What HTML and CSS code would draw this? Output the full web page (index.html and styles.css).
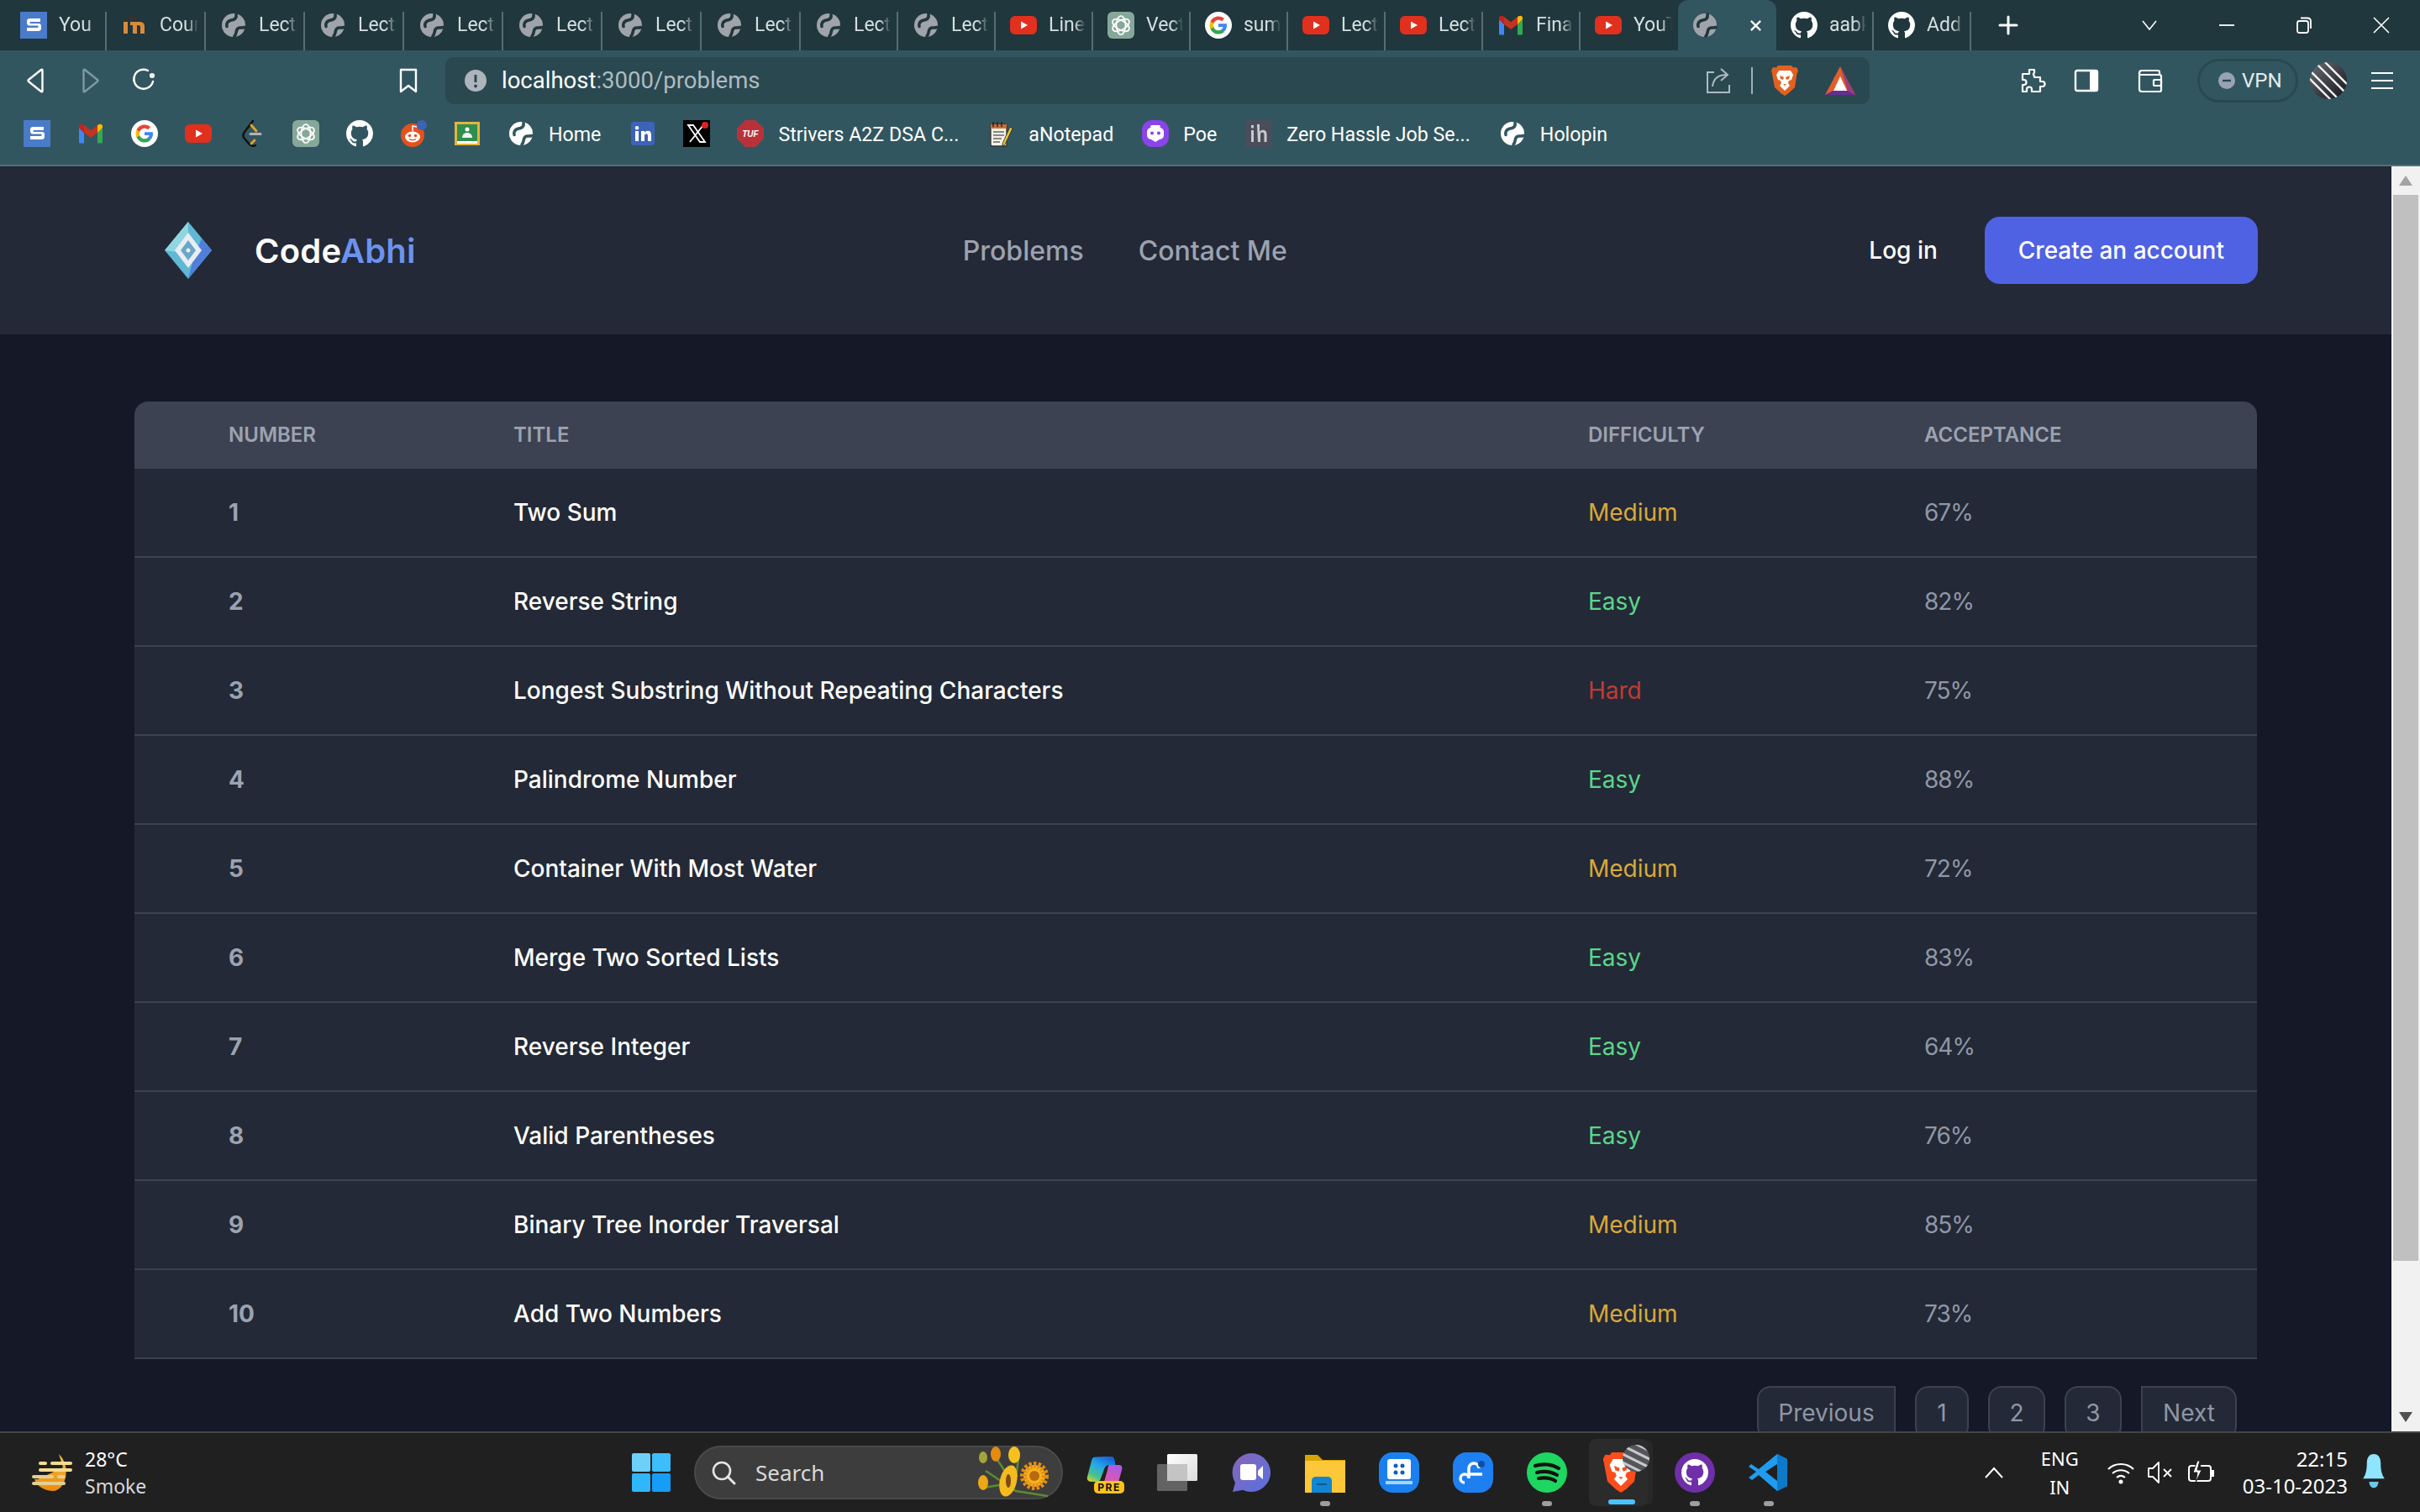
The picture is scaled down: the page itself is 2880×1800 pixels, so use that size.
FILE: index.html
```html
<!DOCTYPE html>
<html lang="en">
<head>
<meta charset="utf-8">
<title>CodeAbhi - Problems</title>
<link rel="stylesheet" href="styles.css">
</head>
<body>
<svg class="defs" width="0" height="0" aria-hidden="true">
  <defs>
  <linearGradient id="gc1" x1="0.7" y1="0" x2="0.1" y2="1"><stop offset="0" stop-color="#1766d8"/><stop offset=".4" stop-color="#25a8e8"/><stop offset=".75" stop-color="#49c28c"/><stop offset="1" stop-color="#d8d22e"/></linearGradient>
  <linearGradient id="gc2" x1="0.7" y1="0" x2="0.3" y2="1"><stop offset="0" stop-color="#a95be6"/><stop offset="1" stop-color="#f0559a"/></linearGradient>
  <linearGradient id="gw" x1="0" y1="0" x2="0" y2="1"><stop offset="0" stop-color="#eec044"/><stop offset="1" stop-color="#ee8a10"/></linearGradient>
  <linearGradient id="gm" x1="0" y1="0" x2="1" y2="1"><stop offset="0" stop-color="#8a63b8"/><stop offset=".5" stop-color="#6f6ccc"/><stop offset="1" stop-color="#5a6fe0"/></linearGradient>
  <linearGradient id="gt1" x1="0" y1="0" x2="1" y2="1"><stop offset="0" stop-color="#ffffff"/><stop offset="1" stop-color="#dcdcdc"/></linearGradient>
  <linearGradient id="gav" x1="0" y1="0" x2="1" y2="1"><stop offset="0" stop-color="#6a6a74"/><stop offset="1" stop-color="#15151a"/></linearGradient>
  </defs>
  <symbol id="i-globe" viewBox="0 0 32 32"><circle cx="16" cy="16" r="14" fill="#a0a4aa"/><path d="M19 3c.5 3-.5 5.500-3.500 6.500-3 .8-5.500 1-7 3.500-.8 1.500-1 3-.5 4.500M29 18.500c-2 .8-3.500.5-5 .5-2.500 0-4 1.500-4.500 3.500-.5 2.500-.5 4.500-2.500 6.500" fill="none" stroke="#1f373d" stroke-width="3.600" stroke-linecap="round"/></symbol>
  <symbol id="i-globe-white" viewBox="0 0 32 32"><circle cx="16" cy="16" r="14" fill="#fff"/><path d="M19 3c.5 3-.5 5.500-3.500 6.500-3 .8-5.500 1-7 3.500-.8 1.500-1 3-.5 4.500M29 18.500c-2 .8-3.500.5-5 .5-2.500 0-4 1.500-4.500 3.500-.5 2.500-.5 4.500-2.500 6.500" fill="none" stroke="#325660" stroke-width="3.600" stroke-linecap="round"/></symbol>
  <symbol id="i-s" viewBox="0 0 32 32"><rect width="32" height="32" fill="#4a7bc8"/><path d="M24 8H11.500C9 8 8 9.500 8 11.500v1.500c0 2 1 3.500 3.500 3.500h9c.8 0 1 .5 1 1v.5c0 .7-.3 1-1 1H8v4h13.500c2.500 0 3.500-1.500 3.500-3.500v-2.500c0-2-1-3-3.500-3h-9c-.7 0-1-.4-1-1s.3-1 1-1H24z" fill="#fff"/></symbol>
  <symbol id="i-yt" viewBox="0 0 32 32"><rect y="5" width="32" height="22" rx="6" fill="#e1301e"/><path d="M13 11.500 21 16l-8 4.500z" fill="#fff"/></symbol>
  <symbol id="i-gh" viewBox="0 0 16 16"><path fill="#fff" d="M8 0C3.580 0 0 3.580 0 8c0 3.540 2.290 6.530 5.470 7.590.4.070.55-.17.55-.38 0-.19-.01-.82-.01-1.490-2.010.37-2.530-.49-2.690-.94-.09-.23-.48-.94-.82-1.130-.28-.15-.68-.52-.01-.53.63-.01 1.080.58 1.230.82.72 1.210 1.870.87 2.330.66.07-.52.28-.87.51-1.070-1.780-.2-3.640-.89-3.640-3.950 0-.87.31-1.590.82-2.150-.08-.2-.36-1.020.08-2.120 0 0 .67-.21 2.200.82.64-.18 1.320-.27 2-.27.68 0 1.360.09 2 .27 1.530-1.040 2.200-.82 2.200-.82.44 1.100.16 1.920.08 2.120.51.56.82 1.270.82 2.150 0 3.070-1.870 3.750-3.650 3.950.29.25.54.73.54 1.480 0 1.070-.01 1.930-.01 2.200 0 .21.15.46.55.38A8.013 8.013 0 0 0 16 8c0-4.420-3.580-8-8-8z"/></symbol>
  <symbol id="i-gpt" viewBox="0 0 32 32"><rect width="32" height="32" rx="6" fill="#86a89a"/><g fill="none" stroke="#fff" stroke-width="1.700"><ellipse cx="16" cy="16" rx="5.500" ry="11"/><ellipse cx="16" cy="16" rx="5.500" ry="11" transform="rotate(60 16 16)"/><ellipse cx="16" cy="16" rx="5.500" ry="11" transform="rotate(120 16 16)"/></g></symbol>
  <symbol id="i-g" viewBox="0 0 32 32"><circle cx="16" cy="16" r="16" fill="#fff"/><path d="M26 16.200c0-.8-.1-1.400-.2-2H16v3.800h5.600c-.2 1.300-1 2.400-2.200 3.100v2.500h3.500c2-1.800 3.100-4.500 3.100-7.400z" fill="#4285f4"/><path d="M16 26.500c2.900 0 5.300-1 7-2.600l-3.500-2.600c-.9.600-2.100 1-3.500 1-2.700 0-5-1.800-5.800-4.300H6.600v2.700c1.700 3.500 5.300 5.800 9.400 5.800z" fill="#34a853"/><path d="M10.200 18c-.2-.6-.3-1.300-.3-2s.1-1.400.3-2v-2.700H6.600C5.900 12.700 5.500 14.300 5.500 16s.4 3.300 1.100 4.700z" fill="#fbbc05"/><path d="M16 9.700c1.500 0 2.900.5 4 1.500l3-3C21.300 6.500 18.900 5.500 16 5.500c-4.100 0-7.700 2.300-9.400 5.800l3.600 2.700c.8-2.500 3.100-4.300 5.800-4.300z" fill="#ea4335"/></symbol>
  <symbol id="i-m" viewBox="0 0 32 32"><path d="M2 9v17c0 1 .6 1.500 1.500 1.500H8V15z" fill="#4285f4"/><path d="M24 15v12.500h4.500c.9 0 1.500-.5 1.500-1.500V9z" fill="#34a853"/><path d="M24 6v9l6-6V7.500C30 5 27.500 4 25.500 5.300z" fill="#fbbc05"/><path d="M8 15V6l8 6.200L24 6v9l-8 6z" fill="#c5321f"/><path d="M2 7.500V9l6 6V6L6.500 5.300C4.500 4 2 5 2 7.500z" fill="#c5221f"/></symbol>
  <symbol id="i-lc" viewBox="0 0 32 32"><path d="M17 1 7 14c-2 3-2 6 0 8l6 7c2 2 5 2 7 1" fill="none" stroke="#111" stroke-width="2.400" stroke-linecap="round"/><path d="M15 6l6 7M19 24l-4 4" stroke="#eaa220" stroke-width="2.800" stroke-linecap="round"/><path d="M14 16.500h12" stroke="#b3b3b3" stroke-width="3" stroke-linecap="round"/></symbol>
  <symbol id="i-reddit" viewBox="0 0 32 32"><circle cx="15" cy="18" r="14" fill="#e5511d"/><circle cx="26" cy="6" r="6" fill="#3d63b5"/><ellipse cx="15" cy="20" rx="9" ry="6.500" fill="#fff"/><circle cx="11.500" cy="18.500" r="1.800" fill="#e5511d"/><circle cx="18.500" cy="18.500" r="1.800" fill="#e5511d"/><path d="M15 13V7l5 1" fill="none" stroke="#fff" stroke-width="1.500"/><path d="M11 22.500c2 1.500 6 1.500 8 0" fill="none" stroke="#e5511d" stroke-width="1.300"/></symbol>
  <symbol id="i-class" viewBox="0 0 32 32"><rect x="1" y="2" width="30" height="28" fill="#e3b53c"/><rect x="4" y="5" width="24" height="20" fill="#2f8f4e"/><rect x="4" y="25" width="24" height="3" fill="#fff"/><circle cx="16" cy="11" r="2.500" fill="#fff"/><path d="M10 21c0-4 3-6 6-6s6 2 6 6z" fill="#f3f3f3"/></symbol>
  <symbol id="i-in" viewBox="0 0 32 32"><rect x="2" y="2" width="28" height="28" rx="3" fill="#3c63b8"/><path d="M7 13h4v12H7zM9 7a2.300 2.300 0 1 1 0 4.600A2.300 2.300 0 0 1 9 7zM14 13h4v2c1-1.500 2.300-2.300 4-2.300 3 0 4 2 4 5V25h-4v-6.300c0-1.500-.5-2.500-1.800-2.500S18 17.300 18 18.700V25h-4z" fill="#fff"/></symbol>
  <symbol id="i-x" viewBox="0 0 32 32"><rect width="32" height="32" fill="#000"/><path d="M6 6h6l14 20h-6zM24 6 8 26" fill="none" stroke="#fff" stroke-width="1.800"/><circle cx="26" cy="6" r="4" fill="#d22"/></symbol>
  <symbol id="i-tuf" viewBox="0 0 32 32"><path d="M10 0h12l10 10v12L22 32H10L0 22V10z" fill="#b9323a"/><text x="16" y="20" text-anchor="middle" font-family="Liberation Sans" font-size="10" font-weight="700" font-style="italic" fill="#fff">TUF</text></symbol>
  <symbol id="i-notepad" viewBox="0 0 32 32"><rect x="4" y="5" width="19" height="26" rx="2" fill="#f3f1e8" stroke="#333" stroke-width="1.300"/><rect x="4" y="5" width="19" height="5" fill="#c96f35"/><path d="M7 2v6M12 2v6M17 2v6" stroke="#222" stroke-width="1.400"/><path d="M7 14h13M7 18h13M7 22h10M7 26h8" stroke="#666" stroke-width="1.500"/><path d="M27 8l3 2-9 19-3 2 .2-3.500z" fill="#e8c33a" stroke="#222" stroke-width=".8"/></symbol>
  <symbol id="i-poe" viewBox="0 0 32 32"><rect width="32" height="32" rx="12" fill="#8a44e8"/><rect x="6" y="9" width="20" height="14" rx="5" fill="#fff"/><rect x="10" y="6" width="12" height="3" rx="1.500" fill="#fff"/><circle cx="12" cy="15.500" r="2" fill="#8a44e8"/><circle cx="20" cy="15.500" r="2" fill="#8a44e8"/><path d="M11 23h10l-5 3z" fill="#fff"/></symbol>
  <symbol id="i-ih" viewBox="0 0 32 32"><rect width="32" height="32" fill="#4a4d5c"/><path d="M7 12h3v14H7zM7 6h3v3.500H7zM14 5h3v9c1-1.500 2.300-2.200 4-2.200 3 0 4.500 2 4.500 5V26h-3v-8.700c0-1.800-.7-2.800-2.200-2.800-1.600 0-2.300 1.200-2.300 2.800V26h-3z" fill="#c9c9c9"/></symbol>
  <symbol id="i-brave" viewBox="0 0 32 36"><path d="M8 0h16l2 2.500 4-.5 2 4-1.500 4-.5 3L28 26l-7.500 7L16 36l-4.500-3L4 26 1.500 13l-.5-3L0 6l2-4 4 .5z" fill="#e2611f"/><path d="M9 6h14l3 5-2 6-3 1-1 3 2 3-6 6-6-6 2-3-1-3-3-1-2-6z" fill="#fff"/><path d="M10 12l5 2-1 3-3-1zM22 12l-5 2 1 3 3-1zM14 22h4l-2 2z" fill="#e2611f"/></symbol>
  <symbol id="i-brave-task" viewBox="0 0 32 36"><path d="M8 0h16l2 2.500 4-.5 2 4-1.500 4-.5 3L28 26l-7.500 7L16 36l-4.500-3L4 26 1.500 13l-.5-3L0 6l2-4 4 .5z" fill="#fb4e1c"/><path d="M9 6h14l3 5-2 6-3 1-1 3 2 3-6 6-6-6 2-3-1-3-3-1-2-6z" fill="#fff"/><path d="M10 12l5 2-1 3-3-1zM22 12l-5 2 1 3 3-1zM14 22h4l-2 2z" fill="#fb4e1c"/></symbol>
  <symbol id="i-bat" viewBox="0 0 36 36"><path d="M18 1l18 34H0z" fill="#e25f28"/><path d="M18 1l18 34-9-5z" fill="#9a3d7e"/><path d="M0 35l9-5h18l9 5z" fill="#662d91"/><path d="M18 13l8 17H10z" fill="#fff"/></symbol>
  <symbol id="i-puzzle" viewBox="0 0 32 32"><path d="M12 3h6v3.500a2.500 2.500 0 0 0 0 4V12h7v5h2.500a3 3 0 0 1 0 6H25v6H15v-2.500a3 3 0 0 0-6 0V29H4v-8h1.500a3 3 0 0 0 0-6H4V8h8z" fill="none" stroke="#fff" stroke-width="2.200" stroke-linejoin="round"/></symbol>
  <symbol id="i-win" viewBox="0 0 46 46"><rect width="22" height="22" rx="2" fill="#6dd0fb"/><rect x="24" width="22" height="22" rx="2" fill="#3dbdfb"/><rect y="24" width="22" height="22" rx="2" fill="#2fb6fb"/><rect x="24" y="24" width="22" height="22" rx="2" fill="#159df7"/></symbol>
  <symbol id="i-flowers" viewBox="0 0 93 64"><path d="M10 30 46 54 84 60M18 8l20 30M50 8l-4 30M8 50l24-4" stroke="#5e8a32" stroke-width="2.500" fill="none"/><circle cx="68" cy="36" r="13" fill="#f5b21e" stroke="#e58d10" stroke-width="8" stroke-dasharray="3 2"/><circle cx="68" cy="36" r="6" fill="#b96a10"/><ellipse cx="37" cy="42" rx="10" ry="19" fill="#f4bb1f" transform="rotate(14 37 42)"/><ellipse cx="37" cy="42" rx="3" ry="8" fill="#7d4b12"/><ellipse cx="22" cy="10" rx="6" ry="9" fill="#e58a12"/><ellipse cx="44" cy="11" rx="7" ry="10" fill="#f7c01e"/><ellipse cx="7" cy="14" rx="5" ry="7" fill="#a3a53b"/><ellipse cx="7" cy="44" rx="6" ry="9" fill="#eba716"/></symbol>
  <symbol id="i-copilot" viewBox="0 0 48 48"><path d="M12 6C14 5 30 5 33 5c3 0 4 2 4.500 4l1 6H31c-3 0-5 2-6 5l-4 11c-1 3-3 4-6 4H10c-4 0-6-3-5-6l5-19c.4-2 1-3 2-4z" fill="url(#gc1)"/><path d="M31 15h12c3 0 4 3 3 6l-4 15c-1 3-3 5-6 5H22l3-6 4-14c.5-3 1-6 2-6z" fill="url(#gc2)"/></symbol>
  <symbol id="i-meet" viewBox="0 0 48 48"><path d="M24 1a23 23 0 1 1-10 43.700L2 47l3-11A23 23 0 0 1 24 1z" fill="url(#gm)"/><rect x="11" y="14" width="19" height="19" rx="3" fill="#fff"/><path d="M32 22l6-6v16l-6-5z" fill="#fff"/></symbol>
  <symbol id="i-taskview" viewBox="0 0 48 44"><rect x="12" width="36" height="32" rx="1.500" fill="url(#gt1)"/><rect y="12" width="36" height="32" rx="1.500" fill="#707070" fill-opacity=".85"/><rect x="12" y="12" width="24" height="20" fill="#c4c4c4"/></symbol>
  <symbol id="i-folder" viewBox="0 0 48 48"><path d="M0 3h15l6 6h27v7H0z" fill="#d9a300"/><path d="M0 10h48v38H0z" fill="#fcc83a"/><path d="M8 48V34c0-3 2-5 5-5h14c3 0 5 2 5 5v14z" fill="#1485d0"/><rect x="14" y="37" width="12" height="2" fill="#0b5a94"/></symbol>
  <symbol id="i-todo" viewBox="0 0 48 48"><rect width="48" height="48" rx="16" fill="#1a80f0"/><rect x="10" y="8" width="28" height="24" rx="3" fill="#fff"/><rect x="8" y="34" width="32" height="4" fill="#a8d3fb"/><circle cx="20" cy="16" r="2.500" fill="#0d5fbe"/><circle cx="28" cy="16" r="2.500" fill="#0d5fbe"/><circle cx="20" cy="24" r="2.500" fill="#0d5fbe"/><circle cx="28" cy="24" r="2.500" fill="#0d5fbe"/></symbol>
  <symbol id="i-f" viewBox="0 0 48 48"><rect width="48" height="48" rx="16" fill="#1e7ff0"/><path d="M14 36a5 5 0 1 1 5-5V19a6 6 0 0 1 12 0M19 26h16" fill="none" stroke="#fff" stroke-width="3.500"/><circle cx="34" cy="14" r="4" fill="#0f4ea8"/></symbol>
  <symbol id="i-spotify" viewBox="0 0 48 48"><circle cx="24" cy="24" r="24" fill="#1ed760"/><path d="M10 16c9-3 20-2 28 3M12 24c8-2 17-1 24 3M14 31c6-1 14-1 20 3" fill="none" stroke="#111" stroke-width="4.200" stroke-linecap="round"/></symbol>
  <symbol id="i-vscode" viewBox="0 0 48 48"><path d="M34 2l12 6v32l-12 6L12 27 4 33l-4-3 9-7-9-6 3-3 9 6z" fill="#1f9cf0"/><path d="M34 2v44l12-6V8z" fill="#0a7ac9"/><path d="M34 14 20 23l14 11z" fill="#202020"/></symbol>
  <symbol id="i-gh-task" viewBox="0 0 48 48"><circle cx="24" cy="24" r="24" fill="#6e2fa8"/><svg x="8" y="8" width="32" height="32" viewBox="0 0 16 16"><use href="#i-gh"/></svg></symbol>
</svg>

<div class="screen">
  <div class="tabstrip">
    <div class="tab tab-wide tab-first"><svg class="fav"><use href="#i-s"/></svg><span class="tab-title">You</span></div>
    <div class="tab tab-wide"><svg class="fav" viewBox="0 0 32 32"><path d="M3 26V12h5v14zM11 26V12h5l6 0c4 0 6 2 6 6v8h-5v-8c0-1-1-2-2-2h-2v10h-5V16h-3z" fill="#d98a3a"/><path d="M4 8l10-4 8 4-8 3z" fill="#333"/></svg><span class="tab-title">Cour</span></div>
    <div class="tab tab-wide"><svg class="fav"><use href="#i-globe"/></svg><span class="tab-title">Lectu</span></div>
    <div class="tab tab-wide"><svg class="fav"><use href="#i-globe"/></svg><span class="tab-title">Lectu</span></div>
    <div class="tab tab-wide"><svg class="fav"><use href="#i-globe"/></svg><span class="tab-title">Lectu</span></div>
    <div class="tab tab-wide"><svg class="fav"><use href="#i-globe"/></svg><span class="tab-title">Lectu</span></div>
    <div class="tab tab-wide"><svg class="fav"><use href="#i-globe"/></svg><span class="tab-title">Lectu</span></div>
    <div class="tab tab-wide"><svg class="fav"><use href="#i-globe"/></svg><span class="tab-title">Lectu</span></div>
    <div class="tab"><svg class="fav"><use href="#i-globe"/></svg><span class="tab-title">Lect</span></div>
    <div class="tab"><svg class="fav"><use href="#i-globe"/></svg><span class="tab-title">Lect</span></div>
    <div class="tab"><svg class="fav"><use href="#i-yt"/></svg><span class="tab-title">Line</span></div>
    <div class="tab"><svg class="fav"><use href="#i-gpt"/></svg><span class="tab-title">Vect</span></div>
    <div class="tab"><svg class="fav"><use href="#i-g"/></svg><span class="tab-title">sum</span></div>
    <div class="tab"><svg class="fav"><use href="#i-yt"/></svg><span class="tab-title">Lect</span></div>
    <div class="tab"><svg class="fav"><use href="#i-yt"/></svg><span class="tab-title">Lect</span></div>
    <div class="tab"><svg class="fav"><use href="#i-m"/></svg><span class="tab-title">Fina</span></div>
    <div class="tab tab-plain"><svg class="fav"><use href="#i-yt"/></svg><span class="tab-title">YouT</span></div>
    <div class="tab tab-active"><svg class="fav"><use href="#i-globe"/></svg><svg class="tab-close" viewBox="0 0 16 16"><path d="M2 2l12 12M14 2 2 14" stroke="#fff" stroke-width="2.400"/></svg></div>
    <div class="tab"><svg class="fav" viewBox="0 0 16 16"><use href="#i-gh"/></svg><span class="tab-title">aabk</span></div>
    <div class="tab"><svg class="fav" viewBox="0 0 16 16"><use href="#i-gh"/></svg><span class="tab-title">Add</span></div>
    <svg class="tab-new" viewBox="0 0 24 24"><path d="M12 2v20M2 12h20" stroke="#fff" stroke-width="3" stroke-linecap="round"/></svg>
    <div class="wincontrols">
      <span class="winbtn"><svg class="wi" viewBox="0 0 20 20"><path d="M2 5l8 10 8-10" fill="none" stroke="#fff" stroke-width="1.600"/></svg></span>
      <span class="winbtn"><svg class="wi" viewBox="0 0 20 20"><path d="M1 10h18" stroke="#fff" stroke-width="1.800"/></svg></span>
      <span class="winbtn"><svg class="wi" viewBox="0 0 20 20"><rect x="2" y="5" width="13" height="14" rx="2.500" fill="none" stroke="#fff" stroke-width="1.800"/><path d="M6 1.500h8c2.500 0 4 1.500 4 4V14" fill="none" stroke="#fff" stroke-width="1.800"/></svg></span>
      <span class="winbtn"><svg class="wi" viewBox="0 0 20 20"><path d="M1 1l18 18M19 1 1 19" stroke="#fff" stroke-width="1.600"/></svg></span>
    </div>
  </div>

  <div class="toolbar">
    <span class="navbtn"><svg class="ti" viewBox="0 0 32 32"><path d="M22 3 7 15c-.7.600-.7 1.400 0 2l15 12c1 .6 1.500.2 1.500-1V4c0-1.200-.5-1.600-1.500-1z" fill="none" stroke="#fff" stroke-width="2.400" stroke-linejoin="round"/></svg></span>
    <span class="navbtn"><svg class="ti" viewBox="0 0 32 32"><path d="M10 3l15 12c.7.600.7 1.400 0 2L10 29c-1 .6-1.500.2-1.500-1V4c0-1.200.5-1.600 1.500-1z" fill="none" stroke="#7f9aa0" stroke-width="2.400" stroke-linejoin="round"/></svg></span>
    <span class="navbtn"><svg class="ti" viewBox="0 0 32 32"><path d="M27 17a11.500 11.500 0 1 1-6-13" fill="none" stroke="#fff" stroke-width="2.400" stroke-linecap="round"/><circle cx="26" cy="10" r="3" fill="#fff"/></svg></span>
    <span class="navbtn navbtn-mark"><svg class="ti" viewBox="0 0 32 32"><path d="M7 3h18v26l-9-7-9 7z" fill="none" stroke="#fff" stroke-width="2.400" stroke-linejoin="round"/></svg></span>
    <div class="urlbar">
      <svg class="url-info" viewBox="0 0 26 26"><circle cx="13" cy="13" r="13" fill="#aeb4bc"/><path d="M13 6v9" stroke="#2a4850" stroke-width="3"/><circle cx="13" cy="19.500" r="1.900" fill="#2a4850"/></svg>
      <span class="url-text"><span class="url-host">localhost</span>:3000/problems</span>
      <svg class="url-share" viewBox="0 0 30 32"><path d="M10 6H2v24h26v-9" fill="none" stroke="#aebcc0" stroke-width="2"/><path d="M8 23c1-9 7-14 17-14M18 2l8 7-8 7" fill="none" stroke="#aebcc0" stroke-width="2"/></svg>
      <span class="url-divider"></span>
      <svg class="url-lion"><use href="#i-brave"/></svg>
      <svg class="url-bat"><use href="#i-bat"/></svg>
    </div>
    <svg class="tb-ic tb-puzzle"><use href="#i-puzzle"/></svg>
    <svg class="tb-ic tb-side" viewBox="0 0 32 32"><rect x="3" y="4" width="26" height="24" rx="2" fill="none" stroke="#fff" stroke-width="2.400"/><rect x="20" y="4" width="9" height="24" fill="#fff"/></svg>
    <svg class="tb-ic tb-wallet" viewBox="0 0 32 32"><path d="M27 9V6a2 2 0 0 0-2-2H6a3 3 0 0 0-3 3v19a3 3 0 0 0 3 3h21a2 2 0 0 0 2-2V11a2 2 0 0 0-2-2H3" fill="none" stroke="#fff" stroke-width="2.200"/><rect x="20" y="15" width="9" height="7" rx="1" fill="none" stroke="#fff" stroke-width="2.200"/></svg>
    <div class="vpn"><svg class="vpn-dot" viewBox="0 0 20 20"><circle cx="10" cy="10" r="10" fill="#98a3b8"/><path d="M5 10h10" stroke="#2a4850" stroke-width="2.400"/></svg><span>VPN</span></div>
    <svg class="avatar" viewBox="0 0 44 44"><clipPath id="av"><circle cx="22" cy="22" r="22"/></clipPath><g clip-path="url(#av)"><rect width="44" height="44" fill="url(#gav)"/><path d="M-6 4 40 50M-6 14l46 46M2-4l46 46M12-6l40 40" stroke="#f2f2f2" stroke-width="2.400"/></g></svg>
    <svg class="tb-menu" viewBox="0 0 28 24"><path d="M1 3h26M1 12h26M1 21h26" stroke="#fff" stroke-width="2.200"/></svg>
  </div>

  <div class="bookmarks">
    <span class="bm"><svg class="fav"><use href="#i-s"/></svg></span>
    <span class="bm"><svg class="fav"><use href="#i-m"/></svg></span>
    <span class="bm"><svg class="fav"><use href="#i-g"/></svg></span>
    <span class="bm"><svg class="fav"><use href="#i-yt"/></svg></span>
    <span class="bm"><svg class="fav"><use href="#i-lc"/></svg></span>
    <span class="bm"><svg class="fav"><use href="#i-gpt"/></svg></span>
    <span class="bm"><svg class="fav" viewBox="0 0 16 16"><use href="#i-gh"/></svg></span>
    <span class="bm"><svg class="fav"><use href="#i-reddit"/></svg></span>
    <span class="bm"><svg class="fav"><use href="#i-class"/></svg></span>
    <span class="bm"><svg class="fav"><use href="#i-globe-white"/></svg><span class="bm-label">Home</span></span>
    <span class="bm"><svg class="fav"><use href="#i-in"/></svg></span>
    <span class="bm"><svg class="fav"><use href="#i-x"/></svg></span>
    <span class="bm"><svg class="fav"><use href="#i-tuf"/></svg><span class="bm-label">Strivers A2Z DSA C...</span></span>
    <span class="bm"><svg class="fav"><use href="#i-notepad"/></svg><span class="bm-label">aNotepad</span></span>
    <span class="bm"><svg class="fav"><use href="#i-poe"/></svg><span class="bm-label">Poe</span></span>
    <span class="bm"><svg class="fav"><use href="#i-ih"/></svg><span class="bm-label">Zero Hassle Job Se...</span></span>
    <span class="bm"><svg class="fav"><use href="#i-globe-white"/></svg><span class="bm-label">Holopin</span></span>
  </div>

  <div class="viewport">
    <main class="page">
      <nav class="sitenav">
        <svg class="logo" viewBox="0 0 56 68"><path d="M28 0 56 34 28 68 0 34z" fill="#5fb8d4"/><path d="M28 0 0 34l14 2L28 14z" fill="#8fd6e0"/><path d="M44 20 56 34 28 68 34 44z" fill="#4f7fd8"/><path d="M28 13 44 34 28 55 12 34z" fill="#e9edf2"/><path d="M28 22 37 34 28 46 19 34z" fill="#6aa7c7"/><circle cx="28" cy="34" r="2.500" fill="#e9edf2"/></svg>
        <span class="brand">Code<span class="brand-accent">Abhi</span></span>
        <div class="navlinks"><a class="navlink">Problems</a><a class="navlink">Contact Me</a></div>
        <div class="navactions"><a class="login">Log in</a><a class="signup">Create an account</a></div>
      </nav>

      <section class="tablewrap">
        <table class="problems">
          <colgroup><col class="c-num"><col class="c-title"><col class="c-diff"><col class="c-acc"></colgroup>
          <thead><tr><th class="num-cell">Number</th><th>Title</th><th>Difficulty</th><th>Acceptance</th></tr></thead>
          <tbody>
            <tr><td class="num-cell">1</td><td class="t">Two Sum</td><td class="medium">Medium</td><td class="acc">67%</td></tr>
            <tr><td class="num-cell">2</td><td class="t">Reverse String</td><td class="easy">Easy</td><td class="acc">82%</td></tr>
            <tr><td class="num-cell">3</td><td class="t">Longest Substring Without Repeating Characters</td><td class="hard">Hard</td><td class="acc">75%</td></tr>
            <tr><td class="num-cell">4</td><td class="t">Palindrome Number</td><td class="easy">Easy</td><td class="acc">88%</td></tr>
            <tr><td class="num-cell">5</td><td class="t">Container With Most Water</td><td class="medium">Medium</td><td class="acc">72%</td></tr>
            <tr><td class="num-cell">6</td><td class="t">Merge Two Sorted Lists</td><td class="easy">Easy</td><td class="acc">83%</td></tr>
            <tr><td class="num-cell">7</td><td class="t">Reverse Integer</td><td class="easy">Easy</td><td class="acc">64%</td></tr>
            <tr><td class="num-cell">8</td><td class="t">Valid Parentheses</td><td class="easy">Easy</td><td class="acc">76%</td></tr>
            <tr><td class="num-cell">9</td><td class="t">Binary Tree Inorder Traversal</td><td class="medium">Medium</td><td class="acc">85%</td></tr>
            <tr><td class="num-cell">10</td><td class="t">Add Two Numbers</td><td class="medium">Medium</td><td class="acc">73%</td></tr>
          </tbody>
        </table>
        <div class="pager">
          <a class="pg pg-first">Previous</a>
          <a class="pg pg-n1">1</a>
          <a class="pg pg-n">2</a>
          <a class="pg pg-n">3</a>
          <a class="pg pg-last">Next</a>
        </div>
      </section>
    </main>
    <div class="scrollbar">
      <span class="sb-btn"><span class="sb-up"></span></span>
      <span class="sb-thumb"></span>
      <span class="sb-track"></span>
      <span class="sb-btn"><span class="sb-down"></span></span>
    </div>
  </div>

  <footer class="taskbar">
    <div class="weather">
      <svg class="weather-ic" viewBox="0 0 48 44"><path d="M32 0c8 8 10 18 8 28-2 9-8 16-15 16S6 40 3 30h4l30-14z" fill="url(#gw)"/><g fill="#f5dc8e"><rect x="8" y="9" width="10" height="4" rx="2"/><rect x="22" y="9" width="26" height="4" rx="2"/><rect x="8" y="17" width="40" height="4" rx="2"/></g><g fill="#e5cf90"><rect y="25" width="26" height="4" rx="2"/><rect x="30" y="25" width="10" height="4" rx="2"/><rect y="33" width="40" height="4" rx="2"/></g></svg>
      <div class="weather-text"><span class="w-temp">28°C</span><span class="w-desc">Smoke</span></div>
    </div>
    <div class="apps">
      <svg class="startlogo"><use href="#i-win"/></svg>
      <div class="search">
        <svg class="search-ic" viewBox="0 0 30 30"><circle cx="13" cy="13" r="10" fill="none" stroke="#e5e5e5" stroke-width="2.600"/><path d="M20 20l8 8" stroke="#e5e5e5" stroke-width="3" stroke-linecap="round"/></svg>
        <span class="search-label">Search</span>
        <svg class="flowers"><use href="#i-flowers"/></svg>
      </div>
      <span class="app app-first"><span class="copilot-wrap"><svg class="app-ic"><use href="#i-copilot"/></svg><span class="pre">PRE</span></span></span>
      <span class="app"><svg class="app-ic"><use href="#i-taskview"/></svg></span>
      <span class="app"><svg class="app-ic"><use href="#i-meet"/></svg></span>
      <span class="app app-run"><svg class="app-ic"><use href="#i-folder"/></svg></span>
      <span class="app"><svg class="app-ic"><use href="#i-todo"/></svg></span>
      <span class="app"><svg class="app-ic"><use href="#i-f"/></svg></span>
      <span class="app app-run"><svg class="app-ic"><use href="#i-spotify"/></svg></span>
      <span class="app app-active"><svg class="app-ic"><use href="#i-brave-task"/></svg><svg class="app-badge" viewBox="0 0 32 34"><clipPath id="bd"><circle cx="16" cy="17" r="16"/></clipPath><g clip-path="url(#bd)"><rect width="32" height="34" fill="#55565c"/><path d="M-4 10 36 30M-4 0l40 20M-4 20l40 20M-4 30l40 20M-4-10l40 20" stroke="#c9c9cc" stroke-width="3"/></g></svg></span>
      <span class="app app-run"><svg class="app-ic"><use href="#i-gh-task"/></svg></span>
      <span class="app app-run"><svg class="app-ic"><use href="#i-vscode"/></svg></span>
    </div>
    <div class="tray">
      <svg class="tray-up" viewBox="0 0 22 14"><path d="M1 13 11 2l10 11" fill="none" stroke="#fff" stroke-width="2"/></svg>
      <div class="lang"><span>ENG</span><span>IN</span></div>
      <svg class="tray-ic tray-wifi" viewBox="0 0 32 32"><g fill="none" stroke="#fff" stroke-width="2.200"><path d="M1 12c8-8 22-8 30 0M6 17c6-5 14-5 20 0M11 22c3-2.500 7-2.500 10 0"/></g><circle cx="16" cy="27" r="2.500" fill="#fff"/></svg>
      <svg class="tray-ic tray-vol" viewBox="0 0 32 32"><path d="M2 11h5l7-7v24l-7-7H2z" fill="none" stroke="#fff" stroke-width="1.800" stroke-linejoin="round"/><path d="M20 12l9 9M29 12l-9 9" stroke="#fff" stroke-width="1.800"/></svg>
      <svg class="tray-ic tray-bat" viewBox="0 0 32 32"><path d="M11 8H5a3 3 0 0 0-3 3v12a3 3 0 0 0 3 3h20a3 3 0 0 0 3-3V11a3 3 0 0 0-3-3h-9" fill="none" stroke="#fff" stroke-width="2"/><rect x="29" y="13" width="3" height="8" fill="#fff"/><path d="M12 2 7 16h5l-2 12 7-15h-5l3-11z" fill="#fff" stroke="#202020"/></svg>
      <div class="clock"><span>22:15</span><span>03-10-2023</span></div>
      <svg class="bell" viewBox="0 0 28 48"><path d="M14 0c6 0 9 5 9 12 0 8 1 14 5 20H0c4-6 5-12 5-20C5 5 8 0 14 0z" fill="#8fe4ff"/><path d="M8 36h12c0 5-3 8-6 8s-6-3-6-8z" fill="#6cc7e8"/></svg>
    </div>
  </footer>
</div>
</body>
</html>
```

FILE: styles.css
```css
* { box-sizing: border-box; }
html, body { margin: 0; padding: 0; height: 100%; }
body { overflow: hidden; font-family: "Inter", "Liberation Sans", sans-serif; background: #141827; }
.defs { position: absolute; }
svg { display: block; flex: none; }
a { text-decoration: none; }

.screen { display: flex; flex-direction: column; width: 2880px; height: 1800px; }

/* Browser tab strip */
.tabstrip { display: flex; height: 60px; padding-left: 9px; background: #1f373d; flex: none; }
.tab { display: flex; align-items: flex-start; width: 116px; margin-top: 14px; padding: 0 7px 0 17px; gap: 14px; border-right: 2px solid #566d73; }
.tab-wide { width: 118px; }
.tab-first { padding-left: 15px; }
.tab-plain { border-right: 0; }
.tab-active { width: 117px; margin-top: 0; padding: 14px 16px 0 16px; background: #325660; border-radius: 12px 12px 0 0; border-right: 0; justify-content: space-between; }
.fav { width: 32px; height: 32px; }
.tab-title { flex: 1; min-width: 0; overflow: hidden; white-space: nowrap; font: 400 23px/32px "Roboto", sans-serif; color: #d7dfe1; -webkit-mask-image: linear-gradient(to right, #000 70%, transparent 100%); mask-image: linear-gradient(to right, #000 70%, transparent 100%); }
.tab-close { width: 15px; height: 15px; margin: 9px 1px 0 0; }
.tab-new { width: 24px; height: 24px; margin: 18px 0 0 32px; }
.wincontrols { display: flex; margin-left: auto; }
.winbtn { display: flex; width: 92px; height: 60px; align-items: center; justify-content: center; }
.wi { width: 20px; height: 20px; }

/* Browser toolbar */
.toolbar { display: flex; align-items: center; height: 64px; padding: 8px 0 0 11px; background: #325660; flex: none; }
.navbtn { display: flex; width: 64px; justify-content: center; }
.navbtn-mark { margin-left: 251px; margin-right: 12px; }
.ti { width: 32px; height: 32px; }
.urlbar { display: flex; align-items: center; width: 1695px; height: 56px; padding: 0 17px 0 23px; background: #2a4850; border-radius: 10px; }
.url-info { width: 26px; height: 26px; }
.url-text { margin-left: 18px; font: 400 27.5px/56px "Roboto", sans-serif; color: #aebcc0; white-space: nowrap; }
.url-host { color: #fff; }
.url-share { width: 30px; height: 32px; margin-left: auto; }
.url-divider { width: 2px; height: 32px; margin: 0 22px 0 24px; background: #9db0b4; }
.url-lion { width: 32px; height: 36px; }
.url-bat { width: 36px; height: 36px; margin-left: 32px; }
.tb-ic { width: 32px; height: 32px; }
.tb-puzzle { margin-left: 178px; }
.tb-side { margin-left: 32px; }
.tb-wallet { margin-left: 44px; }
.vpn { display: flex; align-items: center; gap: 8px; width: 120px; height: 52px; margin-left: 40px; padding-left: 22px; border: 3px solid #2a4850; border-radius: 26px; font: 400 24px/1 "Roboto", sans-serif; color: #e6ecee; }
.vpn-dot { width: 20px; height: 20px; }
.avatar { width: 44px; height: 44px; margin-left: 14px; }
.tb-menu { width: 28px; height: 24px; margin-left: 28px; }

/* Bookmarks */
.bookmarks { display: flex; align-items: center; height: 74px; padding: 0 0 2px 12px; background: #325660; border-bottom: 2px solid #4f7178; flex: none; }
.bm { display: flex; align-items: center; gap: 17px; padding: 0 16px; }
.bm-label { padding-top: 2px; font: 400 23.2px/32px "Roboto", sans-serif; color: #fff; white-space: nowrap; margin-right: 2px; }

/* Page area */
.viewport { display: flex; flex: 1; min-height: 0; }
.page { flex: 1; min-width: 0; overflow: hidden; background: #141827; }
.sitenav { display: flex; align-items: center; height: 200px; padding: 0 159px 0 196px; background: #242937; }
.logo { width: 56px; height: 68px; }
.brand { margin-left: 51px; font-size: 40px; font-weight: 600; letter-spacing: .2px; color: #fff; }
.brand-accent { color: #6b93ee; }
.navlinks { display: flex; gap: 65px; margin-left: 651px; }
.navlink { font-size: 32px; font-weight: 500; color: #9ca3af; }
.navactions { display: flex; align-items: center; gap: 56px; margin-left: auto; }
.login { font-size: 28px; font-weight: 500; color: #fff; }
.signup { display: flex; align-items: center; height: 80px; padding: 0 40px; font-size: 28px; font-weight: 500; color: #fff; background: #4f62e3; border-radius: 18px; }

.tablewrap { margin: 80px 160px 0; }
.problems { width: 100%; table-layout: fixed; border-collapse: separate; border-spacing: 0; }
.c-num { width: 451px; }
.c-title { width: 1279px; }
.c-diff { width: 400px; }
.problems th { height: 80px; padding: 0 0 2px; text-align: left; text-transform: uppercase; font-size: 24px; font-weight: 600; color: #9ca3af; background: #3c4252; }
.problems th.num-cell { padding-left: 112px; }
.problems th:first-child { border-top-left-radius: 16px; }
.problems th:last-child { border-top-right-radius: 16px; }
.problems td { height: 106px; padding: 0; font-size: 28px; background: #232936; border-bottom: 2px solid #3c4252; }
.problems td.num-cell { padding-left: 112px; }
td.num-cell { font-weight: 700; color: #9ca3af; }
td.t { font-weight: 500; color: #fff; }
td.medium { color: #d9a93a; }
td.easy { color: #5cd68a; }
td.hard { color: #c23a34; }
td.acc { letter-spacing: -1px; color: #8f97a6; }

.pager { display: flex; justify-content: flex-end; gap: 23px; margin-top: 32px; padding-right: 24px; }
.pg { display: flex; align-items: center; justify-content: center; height: 64px; font-size: 28px; color: #8f97a6; background: #242937; border: 2px solid #3c4252; }
.pg-first { width: 165px; border-radius: 16px 0 0 16px; }
.pg-last { width: 114px; border-radius: 0 16px 16px 0; }
.pg-n1 { width: 64px; border-radius: 16px; }
.pg-n { width: 68px; border-radius: 16px; }

/* Scrollbar */
.scrollbar { display: flex; flex-direction: column; width: 34px; background: #f1f1f1; flex: none; }
.sb-btn { display: flex; align-items: center; justify-content: center; height: 34px; flex: none; }
.sb-up { width: 0; height: 0; border: 8px solid transparent; border-top: 0; border-bottom: 12px solid #a3a3a3; }
.sb-down { width: 0; height: 0; border: 8px solid transparent; border-bottom: 0; border-top: 12px solid #505050; }
.sb-thumb { height: 1269px; margin: 0 2px; background: #c0c0c0; flex: none; }
.sb-track { flex: 1; }

/* Taskbar */
.taskbar { display: flex; align-items: stretch; height: 96px; padding-left: 38px; background: #202020; border-top: 2px solid #454545; flex: none; }
.weather { display: flex; align-items: center; gap: 15px; width: 714px; }
.weather-ic { width: 48px; height: 44px; }
.weather-text { display: flex; flex-direction: column; font: 400 23px/32px "Noto Sans", sans-serif; color: #fff; }
.w-desc { color: #d8d8d8; }
.apps { display: flex; align-items: center; }
.startlogo { width: 46px; height: 46px; }
.search { display: flex; align-items: center; width: 439px; height: 64px; margin-left: 28px; padding-left: 18px; background: #3d3d3d; border: 2px solid #4a4a4a; border-radius: 32px; }
.search-ic { width: 30px; height: 30px; }
.search-label { margin-left: 23px; font: 400 26px/1 "Noto Sans", sans-serif; color: #d8d8d8; }
.flowers { width: 93px; height: 64px; margin-left: auto; margin-right: 7px; }
.app { position: relative; display: flex; width: 88px; height: 92px; align-items: center; justify-content: center; }
.app-first { margin-left: 4px; }
.app-ic { width: 48px; height: 48px; }
.copilot-wrap { position: relative; display: block; }
.pre { position: absolute; left: 13px; top: 34px; width: 36px; height: 15px; border-radius: 5px; font: 700 12px/15px "Inter", sans-serif; letter-spacing: 1.5px; text-align: center; color: #111; background: #fcc419; }
.app-run::after { content: ""; position: absolute; left: 38px; bottom: 6px; width: 12px; height: 6px; border-radius: 3px; background: #9e9e9e; }
.app-active { width: 70px; height: 80px; margin: 0 12px 0 6px; padding-left: 6px; background: #2b2b2b; border-radius: 8px; box-shadow: 8px 0 0 -2px #282828; }
.app-active::after { content: ""; position: absolute; left: 23px; bottom: 2px; width: 32px; height: 6px; border-radius: 3px; background: #4cc2ff; }
.app-badge { position: absolute; right: -2px; top: 6px; width: 32px; height: 34px; }
.tray { display: flex; align-items: center; margin-left: auto; padding-right: 42px; }
.tray-up { width: 22px; height: 14px; }
.lang { display: flex; flex-direction: column; align-items: center; margin-left: 45px; font: 400 22px/34px "Noto Sans", sans-serif; color: #fff; }
.tray-ic { width: 32px; height: 32px; }
.tray-wifi { margin-left: 34px; }
.tray-vol { margin-left: 15px; }
.tray-bat { margin-left: 16px; }
.clock { display: flex; flex-direction: column; align-items: flex-end; margin-left: 34px; font: 400 24px/32px "Noto Sans", sans-serif; color: #fff; }
.bell { width: 26px; height: 44px; margin-left: 18px; }
```
